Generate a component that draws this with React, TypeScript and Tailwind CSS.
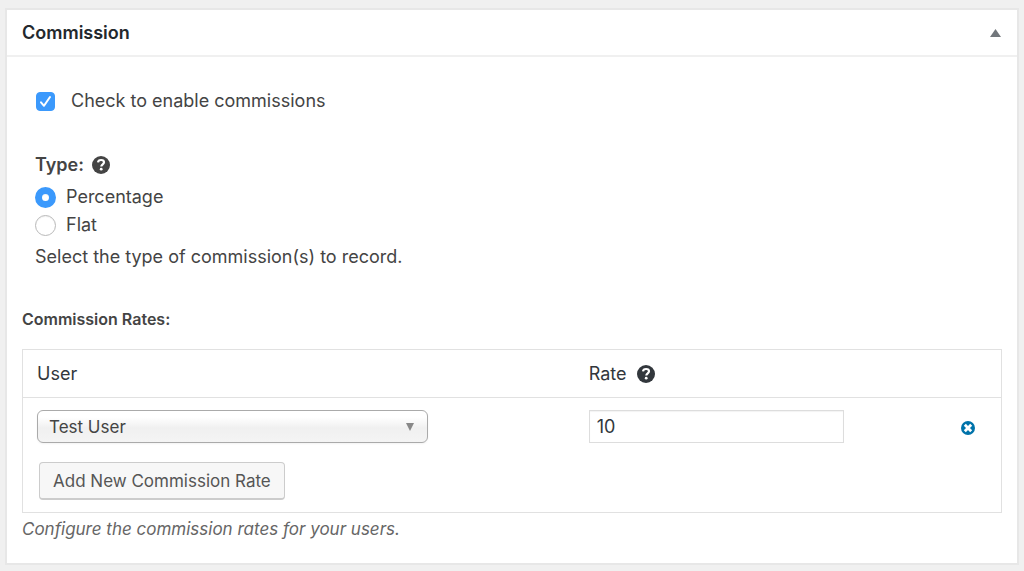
import React, { useState } from 'react';

type CommissionRate = {
  user: string;
  rate: string;
};

const users = ['Test User'];

const types = [
  { value: 'percentage', label: 'Percentage' },
  { value: 'flat', label: 'Flat' }
];

const HelpIcon = () => (
  <svg viewBox="0 0 18 18" className="w-[18px] h-[18px]" role="img" aria-label="Help">
    <circle cx="9" cy="9" r="9" fill="currentColor" />
    <path d="M6 6.4C6.2 4.7 7.4 4 9.1 4c1.8 0 2.9.8 2.9 2.3 0 2-2.7 2-2.7 4.2" fill="none" stroke="#fff" strokeWidth="2.2" />
    <circle cx="9.2" cy="13.2" r="1.4" fill="#fff" />
  </svg>
);

const RemoveIcon = () => (
  <svg viewBox="0 0 14 14" className="w-3.5 h-3.5" aria-hidden="true">
    <circle cx="7" cy="7" r="7" fill="#0073aa" />
    <path d="M3.8 3.8l6.4 6.4M10.2 3.8l-6.4 6.4" stroke="#fff" strokeWidth="2.8" />
  </svg>
);

export default function App() {
  const [open, setOpen] = useState(true);
  const [enabled, setEnabled] = useState(true);
  const [type, setType] = useState('percentage');
  const [rates, setRates] = useState<CommissionRate[]>([{ user: 'Test User', rate: '10' }]);

  const updateRate = (index: number, changes: Partial<CommissionRate>) => {
    setRates(rates.map((r, i) => (i === index ? { ...r, ...changes } : r)));
  };

  return (
    <div className="min-h-screen bg-[#f0f0f0] px-[5px] pt-2 pb-1.5 font-['Inter','Liberation_Sans',sans-serif] text-lg leading-7 text-[#444]">
      <section className="bg-white border-2 border-[#e7e7e7]">
        {/* Header */}
        <header className="flex items-center justify-between h-[47px] pl-[15px] pr-4 border-b-2 border-[#f0f0f0]">
          <h2 className="font-semibold text-[#23282d]">Commission</h2>
          <button type="button" aria-label="Toggle panel" aria-expanded={open} onClick={() => setOpen(!open)}>
            <svg viewBox="0 0 11 8" className="w-[11px] h-2" aria-hidden="true">
              <path d="M5.5 0L11 8H0z" fill="#72777c" />
            </svg>
          </button>
        </header>

        {open && (
          <div className="px-[15px] pt-[30px] pb-5">
            {/* Enable */}
            <label className="flex items-center gap-4 pl-3.5">
              <span className="grid place-items-center">
                <input
                  type="checkbox"
                  checked={enabled}
                  onChange={(e) => setEnabled(e.target.checked)}
                  className="peer col-start-1 row-start-1 appearance-none w-[19px] h-[19px] rounded border border-[#bbb] bg-white checked:border-[#3b99fc] checked:bg-[#3b99fc]"
                />
                <svg viewBox="0 0 19 19" className="col-start-1 row-start-1 w-[19px] h-[19px] pointer-events-none opacity-0 peer-checked:opacity-100" aria-hidden="true">
                  <path d="M5 10.3l3 3.5L14 5" fill="none" stroke="#fff" strokeWidth="2" strokeLinecap="round" strokeLinejoin="round" />
                </svg>
              </span>
              Check to enable commissions
            </label>

            {/* Type */}
            <fieldset className="mt-9 pl-[13px]">
              <legend className="flex items-center gap-2 mb-1 font-semibold">
                Type:
                <HelpIcon />
              </legend>
              {types.map((t) => (
                <label key={t.value} className="flex items-center gap-2.5">
                  <input
                    type="radio"
                    name="commission-type"
                    value={t.value}
                    checked={type === t.value}
                    onChange={() => setType(t.value)}
                    className="appearance-none w-[21px] h-[21px] rounded-full border border-[#b9b9b9] bg-white inset-shadow-xs checked:border-[7px] checked:border-[#3b99fc]"
                  />
                  {t.label}
                </label>
              ))}
              <p className="mt-1">Select the type of commission(s) to record.</p>
            </fieldset>

            {/* Rates */}
            <h3 className="mt-[34px] mb-4 text-base leading-7 font-semibold">Commission Rates:</h3>
            <table className="w-full table-fixed border border-[#e1e1e1] text-left">
              <thead className="text-[#32373c]">
                <tr className="h-12 border-b border-[#e1e1e1]">
                  <th scope="col" className="w-[56%] pl-3.5 font-normal">User</th>
                  <th scope="col" className="pl-[18px] font-normal">
                    <span className="flex items-center gap-2.5">
                      Rate
                      <HelpIcon />
                    </span>
                  </th>
                  <th className="w-[66px]" aria-label="Actions" />
                </tr>
              </thead>
              <tbody>
                {rates.map((r, i) => (
                  <tr key={i}>
                    <td className="pt-3 pl-3.5">
                      <div className="grid items-center w-[391px]">
                        <select
                          aria-label="User"
                          value={r.user}
                          onChange={(e) => updateRate(i, { user: e.target.value })}
                          className="col-start-1 row-start-1 appearance-none h-[33px] w-full pl-[11px] rounded-md border border-[#aaa] bg-linear-to-b from-white from-20% via-[#f0f0f0] via-55% to-[#f4f4f4] text-[17px] shadow-xs"
                        >
                          {users.map((u) => (
                            <option key={u}>{u}</option>
                          ))}
                        </select>
                        <svg viewBox="0 0 8 8" className="col-start-1 row-start-1 justify-self-end w-2 h-2 mr-3.5 pointer-events-none" aria-hidden="true">
                          <path d="M0 0h8L4 8z" fill="#888" />
                        </svg>
                      </div>
                    </td>
                    <td className="pt-3 pl-[18px]">
                      <input
                        type="text"
                        aria-label="Rate"
                        value={r.rate}
                        onChange={(e) => updateRate(i, { rate: e.target.value })}
                        className="block w-[255px] h-[33px] px-[7px] border border-[#ddd] bg-white text-[#32373c] inset-shadow-xs"
                      />
                    </td>
                    <td className="pt-3.5 pr-[26px]">
                      <button
                        type="button"
                        aria-label="Remove rate"
                        onClick={() => setRates(rates.filter((_, j) => j !== i))}
                        className="block ml-auto"
                      >
                        <RemoveIcon />
                      </button>
                    </td>
                  </tr>
                ))}
              </tbody>
              <tfoot>
                <tr>
                  <td colSpan={3} className="pt-[19px] pb-3 pl-4">
                    <button
                      type="button"
                      onClick={() => setRates([...rates, { user: users[0], rate: '' }])}
                      className="block h-[38px] px-[13px] rounded border border-[#ccc] border-b-2 bg-[#f7f7f7] text-[#555] text-[17px]"
                    >
                      Add New Commission Rate
                    </button>
                  </td>
                </tr>
              </tfoot>
            </table>
            <p className="pt-0.5 text-[17px] leading-7 italic text-[#666]">Configure the commission rates for your users.</p>
          </div>
        )}
      </section>
    </div>
  );
}
